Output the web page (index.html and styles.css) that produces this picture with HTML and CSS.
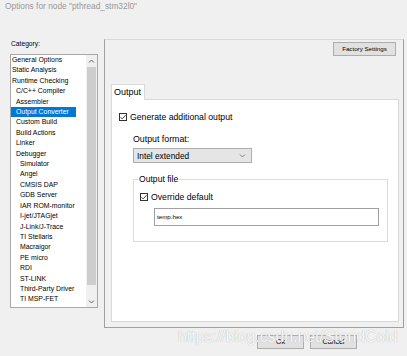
FILE: index.html
```html
<!DOCTYPE html>
<html lang="en">
<head>
    <meta charset="UTF-8">
    <title>Options for node</title>
    <link rel="stylesheet" href="styles.css">
</head>
<body>

    <!-- Window title -->
    <div class="title">Options for node "pthread_stm32l0"</div>

    <div class="dialog">
        <!-- Category tree -->
        <div class="sidebar">
            <div class="cat-label">Category:</div>
            <div class="listbox">
                <ul class="tree">
                    <li class="l0">General Options</li>
                    <li class="l0">Static Analysis</li>
                    <li class="l0">Runtime Checking</li>
                    <li class="l1">C/C++ Compiler</li>
                    <li class="l1">Assembler</li>
                    <li class="l1 selected"><span>Output Converter</span></li>
                    <li class="l1">Custom Build</li>
                    <li class="l1">Build Actions</li>
                    <li class="l1">Linker</li>
                    <li class="l1">Debugger</li>
                    <li class="l2">Simulator</li>
                    <li class="l2">Angel</li>
                    <li class="l2">CMSIS DAP</li>
                    <li class="l2">GDB Server</li>
                    <li class="l2">IAR ROM-monitor</li>
                    <li class="l2">I-jet/JTAGjet</li>
                    <li class="l2">J-Link/J-Trace</li>
                    <li class="l2">TI Stellaris</li>
                    <li class="l2">Macraigor</li>
                    <li class="l2">PE micro</li>
                    <li class="l2">RDI</li>
                    <li class="l2">ST-LINK</li>
                    <li class="l2">Third-Party Driver</li>
                    <li class="l2">TI MSP-FET</li>
                </ul>
                <div class="scrollbar">
                    <div class="arrow">
                        <svg width="7" height="5" viewBox="0 0 7 5"><path d="M1 3.5 L3.5 1 L6 3.5" fill="none" stroke="#606060" stroke-width="1"/></svg>
                    </div>
                    <div class="thumb"></div>
                    <div class="track"></div>
                    <div class="arrow">
                        <svg width="7" height="5" viewBox="0 0 7 5"><path d="M1 1.5 L3.5 4 L6 1.5" fill="none" stroke="#606060" stroke-width="1"/></svg>
                    </div>
                </div>
            </div>
        </div>

        <!-- Options panel -->
        <div class="panel">
            <div class="panel-top">
                <button class="btn factory">Factory Settings</button>
            </div>
            <div class="tabs">
                <div class="tab active">Output</div>
            </div>
            <div class="tab-pane">
                <div class="check-row gen-row">
                    <span class="checkbox">
                        <svg width="8" height="8" viewBox="0 0 8 8"><path d="M1.5 4.2 L3.2 5.9 L6.6 2.2" fill="none" stroke="#333" stroke-width="0.9"/></svg>
                    </span>
                    <span class="gen-text">Generate additional output</span>
                </div>

                <div class="field-label">Output format:</div>
                <div class="select">
                    <span class="select-text">Intel extended</span>
                    <svg width="7" height="5" viewBox="0 0 7 5"><path d="M1 1.5 L3.5 4 L6 1.5" fill="none" stroke="#707070" stroke-width="0.9"/></svg>
                </div>

                <div class="group">
                    <div class="group-label">Output file</div>
                    <div class="check-row override-row">
                        <span class="checkbox">
                            <svg width="8" height="8" viewBox="0 0 8 8"><path d="M1.5 4.2 L3.2 5.9 L6.6 2.2" fill="none" stroke="#333" stroke-width="0.9"/></svg>
                        </span>
                        <span class="override-text">Override default</span>
                    </div>
                    <div class="text-input">temp.hex</div>
                </div>
            </div>
        </div>
    </div>

    <div class="footer">
        <button class="btn">Ok</button>
        <button class="btn">Cancel</button>
    </div>

    <div class="watermark">https://blog.csdn.net/StondCold</div>

</body>
</html>
```

FILE: styles.css
```css
* {
    margin: 0;
    padding: 0;
    box-sizing: border-box;
}
body {
    background-color: #f0f0f0;
    font-family: 'Liberation Sans', Arial, sans-serif;
    width: 407px;
    height: 356px;
    overflow: hidden;
    position: relative;
    color: #000;
}
.title {
    height: 12px;
    line-height: 12px;
    padding-left: 5px;
    font-size: 8.35px;
    color: #999;
}
.dialog {
    display: flex;
    align-items: flex-start;
    margin-top: 27px;
}

/* category tree */
.sidebar {
    margin-left: 10px;
    width: 88px;
}
.cat-label {
    height: 10px;
    line-height: 10px;
    font-size: 6.7px;
    margin-left: 1px;
    margin-bottom: 5px;
}
.listbox {
    display: flex;
    height: 254px;
    border: 1px solid #a8a8a8;
    background: white;
}
.tree {
    list-style: none;
    flex: 1;
    font-size: 6.9px;
    line-height: 10.4px;
    white-space: nowrap;
}
.tree .l0 {
    padding-left: 1px;
}
.tree .l1 {
    padding-left: 5px;
}
.tree .l2 {
    padding-left: 9px;
}
.tree .selected {
    padding-left: 0;
}
.tree .selected span {
    display: inline-block;
    width: 65px;
    padding-left: 5px;
    background: #0078d7;
    color: white;
}
.scrollbar {
    width: 11px;
    display: flex;
    flex-direction: column;
    background: #f0f0f0;
}
.arrow {
    height: 12px;
    display: flex;
    align-items: center;
    justify-content: center;
}
.thumb {
    height: 218px;
    margin: 0 1px;
    background: #cdcdcd;
}
.track {
    flex: 1;
}

/* right panel */
.panel {
    margin-left: 6px;
    width: 300px;
    height: 289px;
    border: 1px solid #a0a0a0;
    border-top-color: #d8d8d8;
    display: flex;
    flex-direction: column;
    padding: 0 4px 5px 6px;
}
.panel-top {
    height: 44px;
    display: flex;
    justify-content: flex-end;
    align-items: flex-start;
}
.btn {
    background: #e1e1e1;
    border: 1px solid #adadad;
    font-family: 'Liberation Sans', Arial, sans-serif;
    font-size: 7px;
    color: #000;
    height: 14px;
    width: 47px;
    line-height: 12px;
}
.factory {
    width: 63px;
    font-size: 6.2px;
    margin: 2px 3px 0 0;
}
.tabs {
    display: flex;
    height: 15px;
}
.tab {
    position: relative;
    z-index: 1;
    width: 34px;
    height: 16px;
    border: 1px solid #d9d9d9;
    border-bottom: none;
    background: white;
    font-size: 9px;
    line-height: 15px;
    padding-left: 2px;
}
.tab-pane {
    flex: 1;
    border: 1px solid #d9d9d9;
    background: white;
}
.check-row {
    display: flex;
    align-items: center;
    height: 8px;
}
.checkbox {
    width: 8px;
    height: 8px;
    border: 1px solid #333;
    display: flex;
    align-items: center;
    justify-content: center;
    background: white;
}
.checkbox svg {
    flex: none;
}
.gen-row {
    margin: 13px 0 0 7px;
}
.gen-text {
    font-size: 8.7px;
    margin-left: 3px;
}
.field-label {
    margin: 13px 0 0 21px;
    font-size: 8.8px;
    line-height: 10px;
}
.select {
    margin: 4px 0 0 21px;
    width: 119px;
    height: 15px;
    border: 1px solid #adadad;
    background: #e5e5e5;
    display: flex;
    align-items: center;
    justify-content: space-between;
    padding: 0 5px 0 3px;
}
.select-text {
    font-size: 8.3px;
}
.group {
    margin: 16px 0 0 21px;
    width: 255px;
    height: 63px;
    border: 1px solid #dcdcdc;
}
.group-label {
    display: table;
    margin: -6px 0 0 4px;
    padding: 0 1px;
    background: white;
    font-size: 8.6px;
    line-height: 10px;
}
.override-row {
    margin: 9px 0 0 6px;
}
.override-text {
    font-size: 8.7px;
    margin-left: 3px;
}
.text-input {
    margin: 7px 0 0 20px;
    width: 225px;
    height: 18px;
    border: 1px solid #a0a0a0;
    font-size: 6.2px;
    line-height: 16px;
    padding-left: 2px;
}

/* dialog buttons */
.footer {
    display: flex;
    gap: 6px;
    margin-top: 7px;
    padding-left: 257px;
}
.watermark {
    position: absolute;
    left: 178px;
    top: 329px;
    font-size: 15.8px;
    line-height: 16px;
    color: rgba(255, 255, 255, 0.9);
    text-shadow: 0 0 1px #a8a8a8;
    white-space: nowrap;
}
```
